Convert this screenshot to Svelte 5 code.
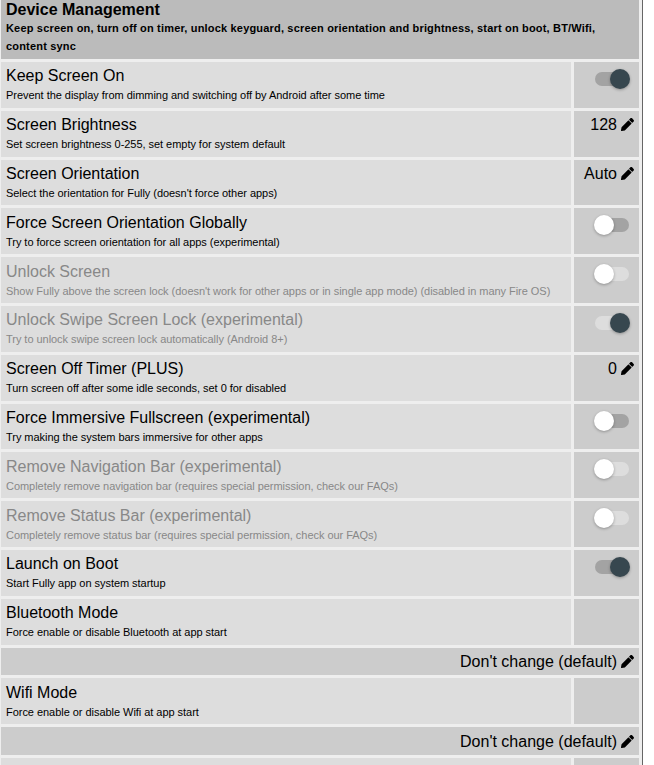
<script>
  const rows = [
    { t: 'Keep Screen On', d: 'Prevent the display from dimming and switching off by Android after some time', sw: true },
    { t: 'Screen Brightness', d: 'Set screen brightness 0-255, set empty for system default', v: '128' },
    { t: 'Screen Orientation', d: "Select the orientation for Fully (doesn't force other apps)", v: 'Auto' },
    { t: 'Force Screen Orientation Globally', d: 'Try to force screen orientation for all apps (experimental)', sw: false },
    { t: 'Unlock Screen', d: "Show Fully above the screen lock (doesn't work for other apps or in single app mode) (disabled in many Fire OS)", sw: false, off: true },
    { t: 'Unlock Swipe Screen Lock (experimental)', d: 'Try to unlock swipe screen lock automatically (Android 8+)', sw: true, off: true },
    { t: 'Screen Off Timer (PLUS)', d: 'Turn screen off after some idle seconds, set 0 for disabled', v: '0' },
    { t: 'Force Immersive Fullscreen (experimental)', d: 'Try making the system bars immersive for other apps', sw: false },
    { t: 'Remove Navigation Bar (experimental)', d: 'Completely remove navigation bar (requires special permission, check our FAQs)', sw: false, off: true },
    { t: 'Remove Status Bar (experimental)', d: 'Completely remove status bar (requires special permission, check our FAQs)', sw: false, off: true },
    { t: 'Launch on Boot', d: 'Start Fully app on system startup', sw: true },
    { t: 'Bluetooth Mode', d: 'Force enable or disable Bluetooth at app start', wide: "Don't change (default)" },
    { t: 'Wifi Mode', d: 'Force enable or disable Wifi at app start', wide: "Don't change (default)" },
    { t: '', d: '' }
  ];
</script>

{#snippet pencil()}
  <svg class="pencil" viewBox="0 0 512 512" aria-hidden="true"><path d="M497.9 142.1l-46.1 46.1c-4.7 4.7-12.3 4.7-17 0l-111-111c-4.7-4.7-4.7-12.3 0-17l46.1-46.1c18.7-18.7 49.1-18.7 67.9 0l60.1 60.1c18.8 18.7 18.8 49.1 0 67.9zM284.2 99.8L21.6 362.4.4 483.9c-2.9 16.4 11.4 30.6 27.8 27.8l121.5-21.3 262.6-262.6c4.7-4.7 4.7-12.3 0-17l-111-111c-4.8-4.7-12.4-4.7-17.1 0z"/></svg>
{/snippet}

<div class="page">
  <div class="list">
    <div class="head">
      <h2>Device Management</h2>
      <p>Keep screen on, turn off on timer, unlock keyguard, screen orientation and brightness, start on boot, BT/Wifi, content sync</p>
    </div>
    {#each rows as r}
      <div class="row" class:off={r.off}>
        <div class="info">
          <div class="title">{r.t}</div>
          <div class="desc">{r.d}</div>
        </div>
        <div class="ctl">
          {#if r.sw !== undefined}
            <span class="switch" class:on={r.sw}><span class="track"></span><span class="knob"></span></span>
          {:else if r.v}
            <span class="val">{r.v} {@render pencil()}</span>
          {/if}
        </div>
      </div>
      {#if r.wide}
        <div class="wide"><span class="val">{r.wide} {@render pencil()}</span></div>
      {/if}
    {/each}
  </div>
</div>

<style>
  :global(body) { margin: 0; background: #fff; overflow: hidden; }
  .page {
    width: 643px; height: 765px; box-sizing: border-box; overflow: hidden;
    background: #eee; border-right: 1px solid #666;
    font-family: "Liberation Sans", Arial, sans-serif; color: #000;
  }
  .list { display: flex; flex-direction: column; gap: 3px; padding: 0 3px 0 1px; }
  .head { background: #bbb; height: 59px; box-sizing: border-box; padding: 0 5px; }
  h2 { margin: 0; font-size: 16px; line-height: 19px; font-weight: bold; }
  .head p { margin: 0; font-size: 11px; line-height: 18px; font-weight: bold; letter-spacing: .18px; }
  .row { display: grid; grid-template-columns: 570px 65px; column-gap: 3px; height: 45.8px; flex: none; }
  .info { background: #ddd; padding: 4.4px 5px 0; box-sizing: border-box; white-space: nowrap; overflow: hidden; }
  .ctl { background: #ccc; display: flex; justify-content: flex-end; align-items: flex-start; padding: 4px 5px 0 0; box-sizing: border-box; }
  .title { font-size: 16px; line-height: 20px; }
  .desc { font-size: 11px; line-height: 16px; margin-top: 1px; letter-spacing: -.04px; }
  .off .title, .off .desc { color: #888; }
  .wide { background: #ccc; height: 27.8px; box-sizing: border-box; flex: none; display: flex; justify-content: flex-end; align-items: center; padding: 1px 5px 0 0; }
  .val { font-size: 16px; line-height: 20px; display: flex; align-items: center; gap: 4px; }
  .pencil { width: 13px; height: 13px; fill: #000; }
  .switch { position: relative; display: block; width: 36px; height: 24px; margin: 1px 4px 0 0; }
  .track { position: absolute; left: 1px; top: 5px; width: 34px; height: 14px; border-radius: 7px; background: #a3a3a3; }
  .knob { position: absolute; top: 2px; left: 0; width: 20px; height: 20px; border-radius: 50%; background: #fff; box-shadow: 0 1px 3px rgba(0,0,0,.3); }
  .switch.on .knob { left: 16px; background: #37474f; }
  .off .track { background: #ddd; }
</style>
